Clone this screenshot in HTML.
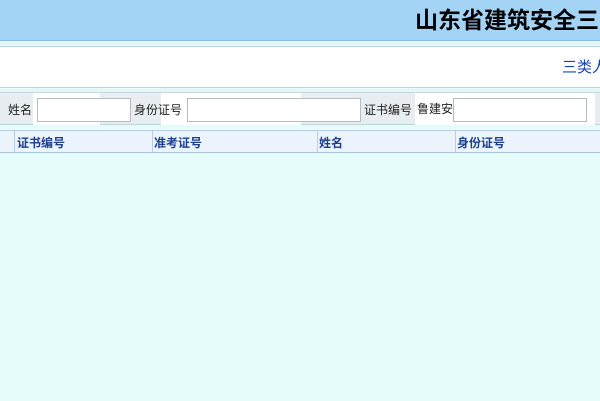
<!DOCTYPE html>
<html><head><meta charset="utf-8"><style>
*{margin:0;padding:0;box-sizing:border-box}
body{width:600px;height:401px;overflow:hidden;background:#e6fcfb;font-family:"Liberation Sans","Noto Sans CJK SC",sans-serif;position:relative}
.a{position:absolute;white-space:nowrap}
</style></head><body>
<div class="a" style="left:0;top:0;width:600px;height:41px;background:#a3d4f6;border-bottom:1px solid #86bde0"></div>
<div class="a" style="left:415px;top:1px;font-size:23px;font-weight:bold;color:#000">山东省建筑安全三</div>
<div class="a" style="left:0;top:42px;width:600px;height:5px;background:#e3f7fa;border-bottom:1px solid #bcd6dc"></div>
<div class="a" style="left:0;top:47px;width:600px;height:41px;background:#fff;border-bottom:1px solid #bcd6dc"></div>
<div class="a" style="left:562px;top:56px;font-size:15px;color:#1a45b0">三类人</div>
<div class="a" style="left:0;top:89px;width:600px;height:4px;background:#e3f7fa;border-bottom:1px solid #c6d8de"></div>
<div class="a" style="left:0;top:93px;width:600px;height:32px;background:#e7edf0;border-bottom:1px solid #bcd6dc"></div>
<div class="a" style="left:33px;top:93px;width:67px;height:32px;background:#fff"></div>
<div class="a" style="left:161px;top:93px;width:140px;height:32px;background:#fff"></div>
<div class="a" style="left:415px;top:93px;width:180px;height:32px;background:#fff"></div>
<div class="a" style="left:37px;top:98px;width:94px;height:24px;background:#fff;border:1px solid #b4bcc4"></div>
<div class="a" style="left:187px;top:98px;width:174px;height:24px;background:#fff;border:1px solid #b4bcc4"></div>
<div class="a" style="left:453px;top:98px;width:134px;height:24px;background:#fff;border:1px solid #b4bcc4"></div>
<div class="a" style="left:8px;top:101px;font-size:12px;color:#222">姓名</div>
<div class="a" style="left:134px;top:101px;font-size:12px;color:#222">身份证号</div>
<div class="a" style="left:364px;top:101px;font-size:12px;color:#222">证书编号</div>
<div class="a" style="left:417px;top:100px;font-size:12px;color:#222">鲁建安</div>
<div class="a" style="left:0;top:130px;width:600px;height:23px;background:#ebf3fc;border-top:1px solid #b6d0e2;border-bottom:1px solid #a8c4da"></div>
<div class="a" style="left:14px;top:131px;width:1px;height:21px;background:#b6d0e2"></div>
<div class="a" style="left:152px;top:131px;width:1px;height:21px;background:#b6d0e2"></div>
<div class="a" style="left:317px;top:131px;width:1px;height:21px;background:#b6d0e2"></div>
<div class="a" style="left:455px;top:131px;width:1px;height:21px;background:#b6d0e2"></div>
<div class="a" style="left:17px;top:134px;font-size:12px;font-weight:bold;color:#1e3f8c">证书编号</div>
<div class="a" style="left:154px;top:134px;font-size:12px;font-weight:bold;color:#1e3f8c">准考证号</div>
<div class="a" style="left:319px;top:134px;font-size:12px;font-weight:bold;color:#1e3f8c">姓名</div>
<div class="a" style="left:457px;top:134px;font-size:12px;font-weight:bold;color:#1e3f8c">身份证号</div>
</body></html>
